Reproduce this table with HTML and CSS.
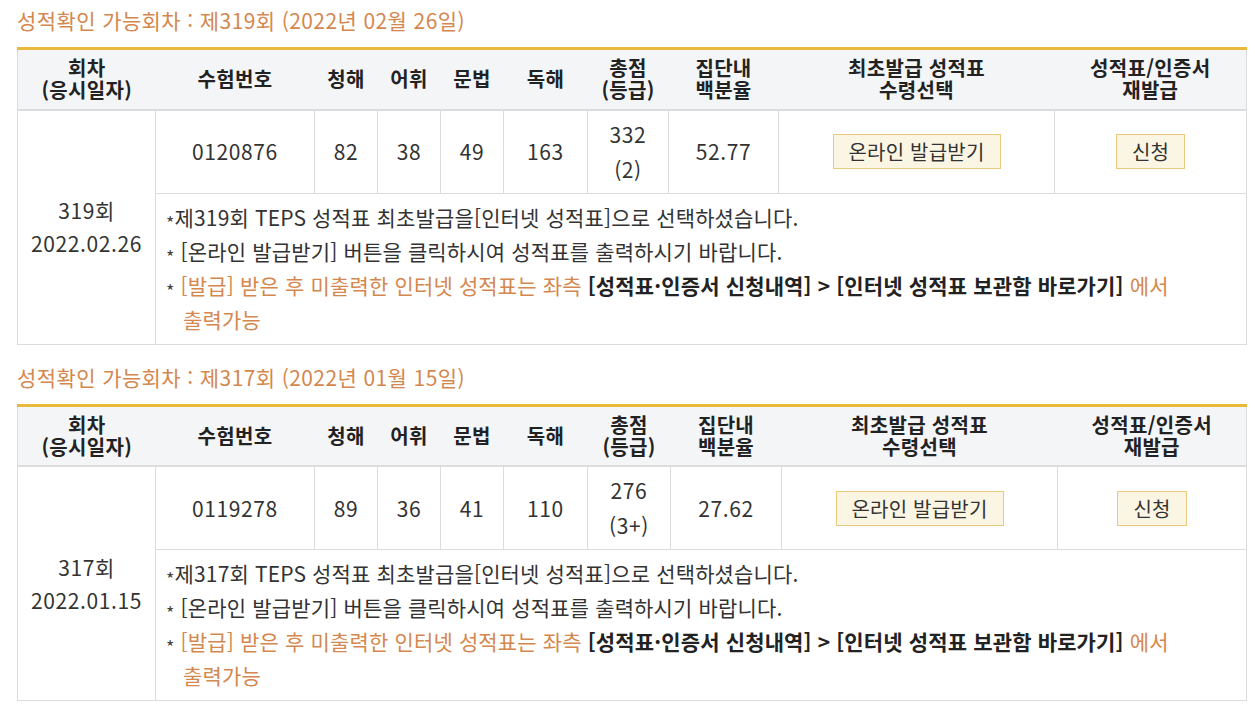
FILE: index.html
```html
<!DOCTYPE html>
<html lang="ko">
<head>
<meta charset="utf-8">
<link rel="stylesheet" href="styles.css">
</head>
<body>
<div class="page">
  <section class="round">
    <h2 class="round-title">성적확인 가능회차 : 제319회 (2022년 02월 26일)</h2>
    <table class="score">
      <colgroup>
        <col class="c-round"><col class="c-num"><col class="c-s"><col class="c-s"><col class="c-s"><col class="c-read"><col class="c-total"><col class="c-pct"><col class="c-issue"><col class="c-re">
      </colgroup>
      <thead>
        <tr>
          <th>회차<br>(응시일자)</th>
          <th>수험번호</th>
          <th>청해</th>
          <th>어휘</th>
          <th>문법</th>
          <th>독해</th>
          <th>총점<br>(등급)</th>
          <th>집단내<br>백분율</th>
          <th>최초발급 성적표<br>수령선택</th>
          <th>성적표/인증서<br>재발급</th>
        </tr>
      </thead>
      <tbody>
        <tr class="data">
          <td rowspan="2" class="round-cell">319회<br>2022.02.26</td>
          <td>0120876</td>
          <td>82</td>
          <td>38</td>
          <td>49</td>
          <td>163</td>
          <td>332<br>(2)</td>
          <td>52.77</td>
          <td><button class="btn" type="button">온라인 발급받기</button></td>
          <td><button class="btn" type="button">신청</button></td>
        </tr>
        <tr>
          <td colspan="9" class="notes">
            <p class="note"><span class="star">*</span>제319회 TEPS 성적표 최초발급을[인터넷 성적표]으로 선택하셨습니다.</p>
            <p class="note"><span class="star">*</span> [온라인 발급받기] 버튼을 클릭하시여 성적표를 출력하시기 바랍니다.</p>
            <p class="note warn"><span class="star">*</span> [발급] 받은 후 미출력한 인터넷 성적표는 좌측 <strong>[성적표·인증서 신청내역] &gt; [인터넷 성적표 보관함 바로가기]</strong> 에서 출력가능</p>
          </td>
        </tr>
      </tbody>
    </table>
  </section>

  <section class="round">
    <h2 class="round-title">성적확인 가능회차 : 제317회 (2022년 01월 15일)</h2>
    <table class="score">
      <colgroup>
        <col class="c-round"><col class="c-num"><col class="c-s"><col class="c-s"><col class="c-s"><col class="c-read"><col class="c-total2"><col class="c-pct2"><col class="c-issue"><col class="c-re2">
      </colgroup>
      <thead>
        <tr>
          <th>회차<br>(응시일자)</th>
          <th>수험번호</th>
          <th>청해</th>
          <th>어휘</th>
          <th>문법</th>
          <th>독해</th>
          <th>총점<br>(등급)</th>
          <th>집단내<br>백분율</th>
          <th>최초발급 성적표<br>수령선택</th>
          <th>성적표/인증서<br>재발급</th>
        </tr>
      </thead>
      <tbody>
        <tr class="data">
          <td rowspan="2" class="round-cell">317회<br>2022.01.15</td>
          <td>0119278</td>
          <td>89</td>
          <td>36</td>
          <td>41</td>
          <td>110</td>
          <td>276<br>(3+)</td>
          <td>27.62</td>
          <td><button class="btn" type="button">온라인 발급받기</button></td>
          <td><button class="btn" type="button">신청</button></td>
        </tr>
        <tr>
          <td colspan="9" class="notes">
            <p class="note"><span class="star">*</span>제317회 TEPS 성적표 최초발급을[인터넷 성적표]으로 선택하셨습니다.</p>
            <p class="note"><span class="star">*</span> [온라인 발급받기] 버튼을 클릭하시여 성적표를 출력하시기 바랍니다.</p>
            <p class="note warn"><span class="star">*</span> [발급] 받은 후 미출력한 인터넷 성적표는 좌측 <strong>[성적표·인증서 신청내역] &gt; [인터넷 성적표 보관함 바로가기]</strong> 에서 출력가능</p>
          </td>
        </tr>
      </tbody>
    </table>
  </section>
</div>
</body>
</html>
```

FILE: styles.css
```css
* { box-sizing: border-box; }

html, body {
  margin: 0;
  padding: 0;
  background: #fff;
}

body {
  font-family: "Noto Sans CJK KR", "Noto Sans", sans-serif;
  color: #333;
  font-size: 21px;
}

.page {
  padding: 5px 0 0 17px;
  width: 1246px;
}

.round + .round {
  margin-top: 17px;
}

.round-title {
  margin: 0 0 12px;
  font-size: 21px;
  font-weight: normal;
  line-height: 30px;
  color: #d4874e;
  letter-spacing: 0.4px;
}

.score {
  width: 1229px;
  border-collapse: collapse;
  table-layout: fixed;
  border-top: 3px solid #e8b93a;
  border-left: 1px solid #dcdcdc;
  border-right: 1px solid #dcdcdc;
  border-bottom: 1px solid #dcdcdc;
}

.c-round { width: 138px; }
.c-num { width: 159px; }
.c-s { width: 63px; }
.c-read { width: 84px; }
.c-total { width: 81px; }
.c-pct { width: 110px; }
.c-issue { width: 276px; }
.c-re { width: 192px; }
.c-total2 { width: 83px; }
.c-pct2 { width: 111px; }
.c-re2 { width: 189px; }

.score th {
  background: #f4f5f7;
  color: #222;
  font-weight: bold;
  font-size: 20px;
  line-height: 22px;
  height: 61px;
  padding: 0;
  text-align: center;
  vertical-align: middle;
  border-bottom: 2px solid #dcdcdc;
  letter-spacing: 0.3px;
}

.score td {
  border: 1px solid #dcdcdc;
  text-align: center;
  vertical-align: middle;
  line-height: 35px;
  padding: 6px 0;
  color: #333;
  font-size: 21px;
  letter-spacing: 0.6px;
}

.data td {
  height: 83px;
}

.round-cell {
  line-height: 33px !important;
}

.btn {
  font-family: inherit;
  font-size: 20px;
  color: #333;
  background: #fbf5e3;
  border: 1px solid #e9c97c;
  height: 35px;
  padding: 0 15px;
  line-height: 33px;
  border-radius: 0;
  letter-spacing: 0.2px;
}

.score td.notes {
  text-align: left;
  padding: 7px 10px 8px 10px;
  line-height: 33px;
  letter-spacing: 0;
  word-break: keep-all;
}

.note {
  margin: 0;
  padding-left: 17px;
  text-indent: -17px;
  letter-spacing: 0.15px;
}

.star {
  color: #444;
  display: inline-block;
  text-indent: 0;
  font-size: 18px;
  position: relative;
  top: 4px;
}

.warn {
  color: #d4874e;
}

.warn strong {
  color: #222;
  font-weight: bold;
}
```
